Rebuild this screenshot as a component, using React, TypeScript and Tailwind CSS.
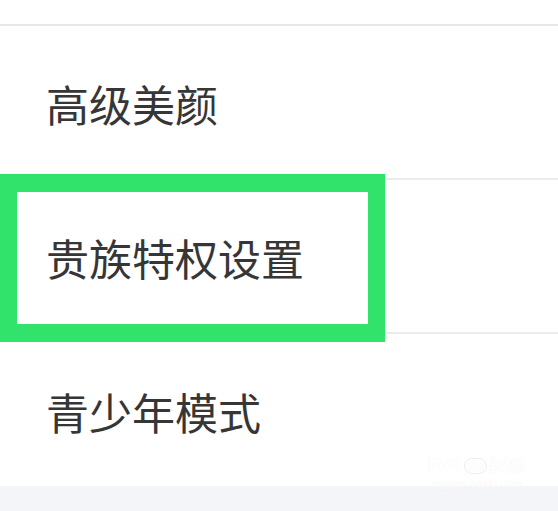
import React from "react";

const rows = ["高级美颜", "贵族特权设置", "青少年模式"];

export default function App() {
  return (
    <div
      className="relative w-[558px] h-[511px] overflow-hidden bg-white"
      style={{ fontFamily: '"Noto Sans CJK SC", "Noto Sans", sans-serif' }}
    >
      <div className="h-[24px]" />
      <div className="h-[2px] bg-[#e7e7ec]" />
      {rows.map((t, i) => (
        <div key={t}>
          <div className="h-[152px] flex items-center pl-[46px]">
            <span className="text-[43px] leading-none text-[#363636] pt-[2px]">{t}</span>
          </div>
          {i < rows.length - 1 && <div className="h-[2px] bg-[#ececf0]" />}
        </div>
      ))}
      <div className="h-[40px] bg-[#f4f5f8]" />

      {/* highlight box */}
      <div className="absolute left-0 top-[174px] w-[385px] h-[168px] border-[17px] border-t-[18px] border-b-[18px] border-[#31e36b]" />

      {/* watermark */}
      <div
        className="absolute left-[428px] top-[452px] flex flex-col items-center text-white select-none"
        style={{ textShadow: "0 0 1px rgba(0,0,0,0.07)" }}
      >
        <div className="flex items-end gap-[2px] leading-none">
          <span className="text-[22px] font-bold" style={{ fontFamily: '"Liberation Sans", sans-serif' }}>Bai</span>
          <span className="text-[14px] font-bold rounded-full border border-[#eeeeee] px-[2px]" style={{ fontFamily: '"Liberation Sans", sans-serif' }}>du</span>
          <span className="text-[18px] font-bold">经验</span>
        </div>
        <span className="text-[11px] leading-none mt-[4px]" style={{ fontFamily: '"Liberation Sans", sans-serif' }}>jingyan.baidu.com</span>
      </div>
    </div>
  );
}
